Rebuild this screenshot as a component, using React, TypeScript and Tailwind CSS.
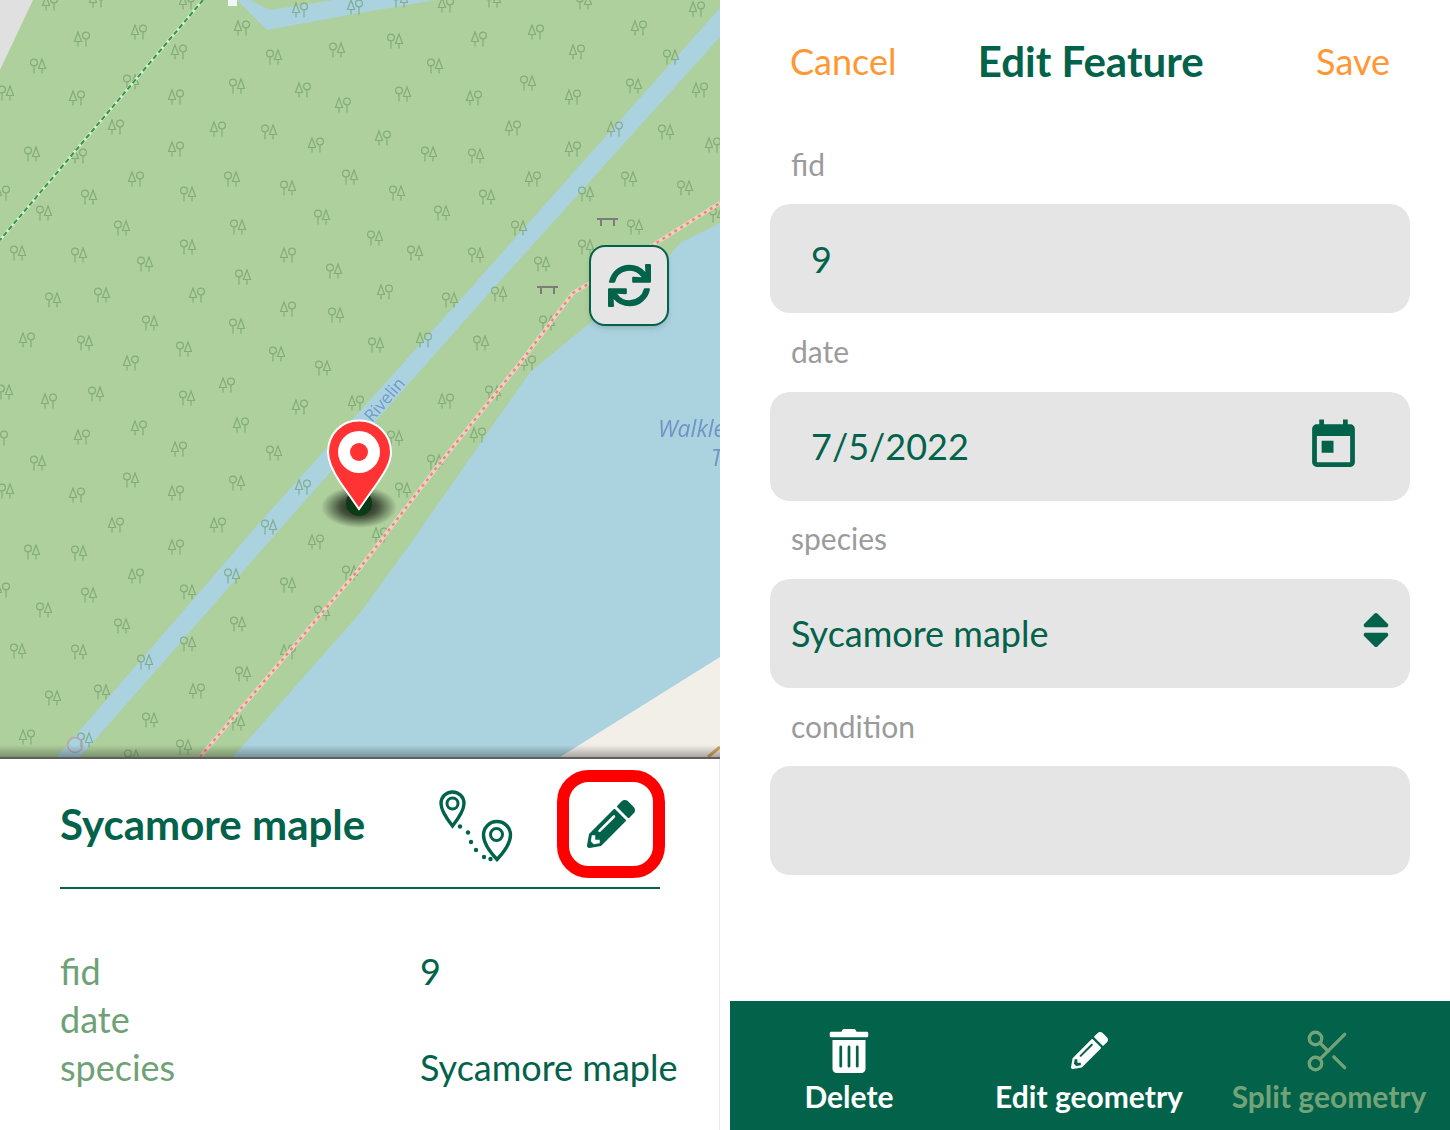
import { FaPencilAlt, FaSort, FaSync, FaTrashAlt } from "react-icons/fa";
import { MdToday } from "react-icons/md";
import { Scissors } from "lucide-react";

// x, y, conifer on the left (1) or round tree on the left (0)
const trees: [number, number, number][] = [
  [50, 3, 1], [97, 0, 1], [187, 2, 1], [300, 10, 1], [355, 7, 1], [139, 32, 1], [82, 39, 1], [242, 28, 1],
  [337, 50, 0], [179, 52, 1], [274, 57, 0], [38, 66, 0], [237, 86, 0], [131, 82, 0], [303, 90, 1], [6, 93, 0],
  [77, 98, 1], [176, 97, 1], [343, 105, 1], [116, 127, 1], [218, 129, 1], [269, 132, 0], [316, 145, 1],
  [32, 154, 0], [79, 156, 1], [176, 149, 1], [136, 179, 1], [232, 179, 0], [350, 177, 0], [288, 188, 0],
  [188, 194, 0], [89, 197, 0], [2, 193, 1], [44, 213, 0], [322, 217, 0], [238, 227, 0], [122, 228, 0],
  [18, 253, 0], [79, 255, 0], [188, 247, 0], [288, 255, 1], [334, 271, 0], [145, 264, 0], [243, 277, 0],
  [102, 295, 0], [197, 295, 1], [53, 300, 0],
  [400, 0, 0], [446, 5, 1], [493, 0, 0], [584, 2, 0], [697, 9, 1], [395, 41, 0], [479, 39, 1], [536, 32, 1],
  [639, 28, 1], [577, 52, 1], [671, 57, 0], [435, 66, 0], [403, 94, 0], [474, 98, 1], [528, 83, 0], [573, 97, 1],
  [634, 86, 0], [700, 90, 1], [513, 128, 1], [383, 138, 1], [615, 129, 1], [429, 154, 0], [476, 156, 0],
  [573, 149, 1], [666, 132, 0], [713, 145, 1], [533, 179, 1], [629, 179, 0], [397, 193, 0], [487, 197, 0],
  [586, 194, 0], [685, 188, 0], [442, 213, 0], [519, 228, 0], [635, 227, 0], [375, 238, 0], [415, 253, 0],
  [476, 255, 0], [586, 247, 0], [542, 264, 0], [385, 292, 1], [450, 300, 0], [499, 294, 0], [717, 215, 0],
  [288, 309, 1], [336, 315, 0], [150, 323, 0], [237, 326, 0], [27, 340, 1], [85, 343, 0], [184, 349, 0],
  [277, 354, 0], [323, 368, 0], [131, 363, 1], [227, 385, 1], [5, 392, 0], [49, 401, 1], [96, 394, 0],
  [187, 398, 0], [300, 407, 1], [356, 403, 1], [139, 428, 1], [241, 425, 1], [82, 437, 1], [0, 438, 1],
  [179, 449, 1], [274, 453, 0], [38, 463, 0], [131, 480, 0], [237, 483, 0], [303, 487, 1], [6, 491, 0],
  [77, 495, 1], [176, 493, 1], [116, 525, 1], [218, 525, 1], [269, 527, 0], [395, 438, 0], [446, 401, 1],
  [478, 435, 1], [435, 462, 0], [403, 490, 0], [493, 393, 0], [481, 343, 0], [424, 340, 1], [376, 345, 0],
  [547, 323, 0], [528, 363, 1], [380, 535, 1],
  [32, 552, 0], [79, 553, 0], [176, 547, 1], [316, 542, 1], [136, 576, 1], [89, 595, 0], [188, 592, 0],
  [232, 576, 0], [288, 585, 0], [350, 573, 0], [2, 590, 1], [44, 610, 0], [122, 626, 0], [238, 624, 0],
  [322, 613, 0], [18, 651, 0], [79, 652, 0], [188, 644, 0], [288, 652, 1], [145, 662, 0], [243, 674, 0],
  [102, 692, 0], [197, 691, 1], [53, 698, 0], [27, 737, 1], [85, 740, 0], [150, 720, 0], [237, 723, 0],
  [184, 747, 0], [132, 757, 0],
];

function TreePair({ x, y, coniferFirst }: { x: number; y: number; coniferFirst: boolean }) {
  const roundX = coniferFirst ? 4 : -4;
  const coniferX = coniferFirst ? -4 : 4;
  return (
    <g transform={`translate(${x} ${y})`} fill="none" stroke="#6d9a69" strokeWidth="1.200" opacity="0.65">
      <circle cx={roundX} cy={-3.500} r="3.400" />
      <path d={`M${roundX} 0V7.500`} />
      <path d={`M${coniferX} -7L${coniferX + 3.500} 2.500H${coniferX - 3.500}Z M${coniferX} 2.500V7.500`} />
    </g>
  );
}

function Bench({ x, y }: { x: number; y: number }) {
  return (
    <path
      transform={`translate(${x} ${y})`}
      d="M0 0H21V2H18V8H16V2H5V8H3V2H0Z"
      fill="#7d7d78"
    />
  );
}

function MapCanvas() {
  return (
    <svg width="720" height="757" viewBox="0 0 720 757" className="block blur-[0.5px]">
      <defs>
        <radialGradient id="pinShadow">
          <stop offset="0%" stopColor="#000" stopOpacity="0.9" />
          <stop offset="50%" stopColor="#000" stopOpacity="0.6" />
          <stop offset="100%" stopColor="#000" stopOpacity="0" />
        </radialGradient>
        <linearGradient id="mapEdge" x1="0" y1="0" x2="0" y2="1">
          <stop offset="0%" stopColor="#000" stopOpacity="0" />
          <stop offset="100%" stopColor="#000" stopOpacity="0.3" />
        </linearGradient>
      </defs>
      <rect width="720" height="757" fill="#aed09c" />
      <polygon points="0,0 33,0 0,70" fill="#e0e0e0" />
      <polygon points="237,0 267,30 360,13 435,0 333,0 270,10 250,0" fill="#aad2df" />
      <polygon points="720,8 460,300 262,520 57,757 80,757 288,520 483,300 720,37" fill="#aad2df" />
      <polygon points="720,223 680,243 670,255 590,323 530,372 413,540 360,613 233,757 720,757" fill="#abd2df" />
      <polygon points="720,657 560,757 720,757" fill="#f2efe9" />
      <path d="M708 757L720 747" stroke="#d8a85d" strokeWidth="3" />
      <rect x="228" y="0" width="9" height="6" fill="#f2f6f8" />
      {trees.map(([x, y, conifer], i) => (
        <TreePair key={i} x={x} y={y} coniferFirst={conifer === 1} />
      ))}
      <Bench x={597} y={218} />
      <Bench x={537} y={286} />
      <path d="M203 0L0 240" stroke="#dbe9d2" strokeWidth="3" fill="none" />
      <path d="M203 0L0 240" stroke="#2f9a3f" strokeWidth="2" strokeDasharray="5 3" fill="none" />
      <path
        d="M200 757L360 568L437 467L520 363L573 293L590 283L650 247L720 203"
        stroke="#e6d5c0"
        strokeWidth="4"
        fill="none"
      />
      <path
        d="M200 757L360 568L437 467L520 363L573 293L590 283L650 247L720 203"
        stroke="#f98080"
        strokeWidth="2.500"
        strokeDasharray="3 4"
        fill="none"
      />
      <circle cx="75" cy="745" r="7.500" fill="none" stroke="#b9a3ae" strokeWidth="1.500" />
      <text
        transform="translate(372 423) rotate(-49)"
        fontFamily="'Open Sans', sans-serif"
        fontSize="17"
        fill="#7399cc"
      >
        Rivelin
      </text>
      <text x="658" y="437" fontFamily="'Open Sans', sans-serif" fontSize="23" fontStyle="italic" fill="#6f94c6">
        Walkle
      </text>
      <text x="711" y="466" fontFamily="'Open Sans', sans-serif" fontSize="23" fontStyle="italic" fill="#6f94c6">
        T
      </text>
      <rect x="0" y="745" width="720" height="12" fill="url(#mapEdge)" />
      <ellipse cx="359" cy="507" rx="38" ry="21" fill="url(#pinShadow)" />
      <circle cx="359" cy="503" r="13" fill="#0b3a16" />
      <path
        d="M359 420.500C341 420.500 328 434.500 328 452C328 463 334 473 340 482L359 509L378 482C384 473 391 463 391 452C391 434.500 377 420.500 359 420.500Z"
        fill="#ff3334"
        stroke="#fff"
        strokeWidth="2"
      />
      <circle cx="359" cy="452" r="21" fill="#fff" />
      <circle cx="359" cy="452" r="9" fill="#ff3334" />
    </svg>
  );
}

function RouteIcon() {
  return (
    <svg width="80" height="76" viewBox="0 0 80 76" fill="none" stroke="#02624a" className="shrink-0 mt-[6px]">
      <path
        d="M16.500 4C10 4 5 9 5 15.500C5 22 11 31 16.500 38C22 31 28 22 28 15.500C28 9 23 4 16.500 4Z"
        strokeWidth="3.400"
      />
      <circle cx="16.500" cy="15.500" r="5.500" strokeWidth="3" />
      <path
        d="M61 33.500C53.500 33.500 47.500 39.500 47.500 47C47.500 54 54 64 61 71.500C68 64 74.500 54 74.500 47C74.500 39.500 68.500 33.500 61 33.500Z"
        strokeWidth="3.400"
      />
      <circle cx="60.500" cy="46.500" r="6" strokeWidth="3" />
      <g fill="#02624a" stroke="none">
        <circle cx="24" cy="38.500" r="2.200" />
        <circle cx="32" cy="44.500" r="2.200" />
        <circle cx="35" cy="54" r="2.200" />
        <circle cx="40" cy="62" r="2.200" />
        <circle cx="48" cy="69" r="2.200" />
        <circle cx="54.500" cy="71" r="2.200" />
      </g>
    </svg>
  );
}

function Field({ label, value, children }: { label: string; value?: string; children?: React.ReactNode }) {
  return (
    <div>
      <div className="h-[78.300px] pb-[3px] pl-[21px] flex items-center text-[30px] leading-none text-[#9b9b9b]">{label}</div>
      <div className="h-[109px] rounded-[20px] bg-[#e5e5e5] flex items-center justify-between text-[36px] text-[#02624a]">
        {value && <span className={value === "Sycamore maple" ? "pl-[21px]" : "pl-[41px]"}>{value}</span>}
        {children}
      </div>
    </div>
  );
}

export default function App() {
  return (
    <div className="w-[1450px] h-[1130px] flex bg-white overflow-hidden font-['Lato',sans-serif] text-[#02624a]">
      {/* Map + feature panel */}
      <div className="w-[720px] shrink-0 flex flex-col">
        <div className="relative h-[757px] overflow-hidden">
          <MapCanvas />
          <button className="absolute left-[589px] top-[245px] w-[80px] h-[81px] rounded-[16px] border-2 border-[#02624a] bg-[#e5e5e5] shadow-md flex items-center justify-center">
            <FaSync size={43} color="#02624a" />
          </button>
        </div>
        <div className="h-[2px] bg-[#5f5f5f]" />
        <div className="flex-1 pl-[60px] pr-[59px] border-r border-[#e8e8e8]">
          <div className="h-[130px] border-b-2 border-[#02624a] flex items-center">
            <h2 className="w-[376px] shrink-0 text-[42px] font-bold leading-none pt-[1px]">Sycamore maple</h2>
            <RouteIcon />
            <div className="ml-[41px] mt-[1px] w-[108px] h-[108px] shrink-0 rounded-[32px] border-[12px] border-[#ff0000] flex items-center justify-center">
              <FaPencilAlt size={48} color="#02624a" />
            </div>
          </div>
          <div className="pt-[58px] text-[36px] leading-[48px] grid grid-cols-[360px_1fr]">
            <span className="text-[#6ea276]">fid</span>
            <span>9</span>
            <span className="text-[#6ea276]">date</span>
            <span />
            <span className="text-[#6ea276]">species</span>
            <span className="whitespace-nowrap">Sycamore maple</span>
          </div>
        </div>
      </div>

      {/* Edit form */}
      <div className="w-[720px] ml-[10px] shrink-0 flex flex-col">
        <div className="h-[126px] pl-[60px] pr-[60px] pb-[4px] flex items-center justify-between">
          <span className="text-[36px] text-[#ff9733]">Cancel</span>
          <span className="text-[42px] font-bold -ml-[31px]">Edit Feature</span>
          <span className="text-[36px] text-[#ff9733]">Save</span>
        </div>
        <div className="px-[40px]">
          <Field label="fid" value="9" />
          <Field label="date" value="7/5/2022">
            <MdToday size={57} color="#02624a" className="mr-[48px] -mt-[2px]" />
          </Field>
          <Field label="species" value="Sycamore maple">
            <FaSort size={44} color="#02624a" className="mr-[12px] -mt-[6px]" />
          </Field>
          <Field label="condition" />
        </div>
        <div className="mt-auto h-[129px] bg-[#02624a] grid grid-cols-3 text-[30px] font-bold leading-none">
          <div className="flex flex-col items-center pt-[28px] pr-[2px] text-white">
            <FaTrashAlt size={44} />
            <span className="mt-[8px]">Delete</span>
          </div>
          <div className="flex flex-col items-center pt-[31px] pr-[2px] text-white">
            <FaPencilAlt size={37} />
            <span className="mt-[12px]">Edit geometry</span>
          </div>
          <div className="flex flex-col items-center pt-[25px] pr-[2px] text-[#73a378]">
            <Scissors size={50} strokeWidth={1.6} className="-ml-[2px]" />
            <span className="mt-[5px] whitespace-nowrap">Split geometry</span>
          </div>
        </div>
      </div>
    </div>
  );
}
